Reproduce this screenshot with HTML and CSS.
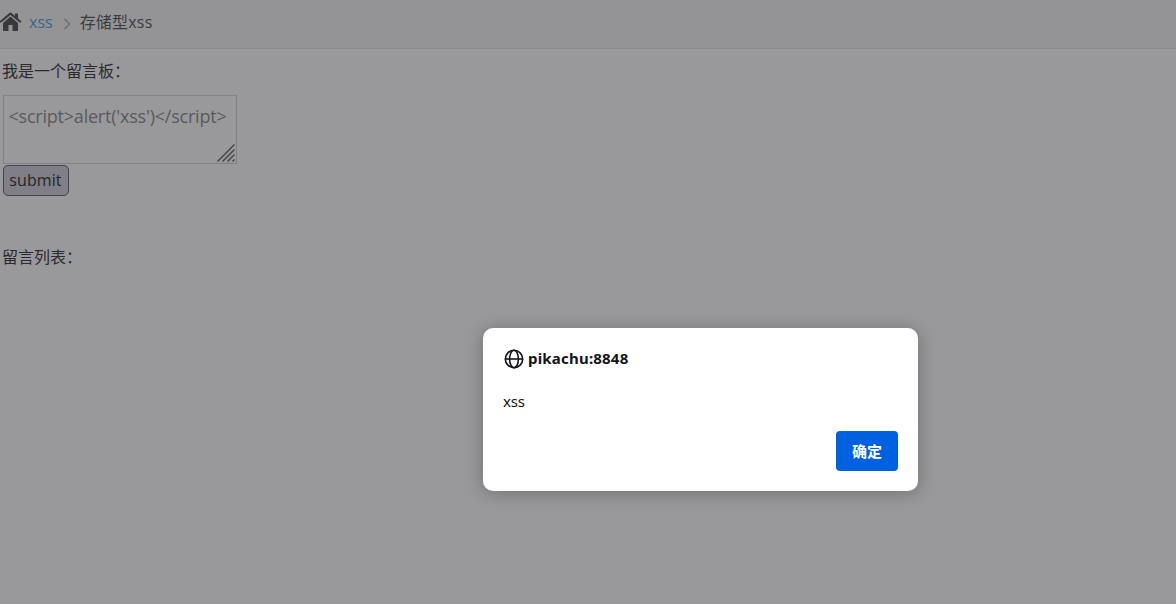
FILE: index.html
```html
<!DOCTYPE html>
<html lang="zh-CN">
<head>
<meta charset="utf-8">
<title>存储型xss</title>
<link rel="stylesheet" href="styles.css">
</head>
<body>
<nav class="breadcrumbs">
  <svg class="home" viewBox="0 0 22 20" width="22" height="20"><path d="M10.500 4.600 3 11v7.200q0 .8.8.8H8.500v-6h4v6h4.700q.8 0 .8-.8V11z"/><path d="M10.500.6q.6 0 1.200.5L15 3.900V1.400h3v5l3.500 3-.9 1.200q-.4.3-.8 0L10.500 3 1.200 10.600q-.4.3-.8 0l-.9-1.200L9.300 1.100q.6-.5 1.200-.5z"/></svg>
  <a class="crumb-link" href="#">xss</a>
  <svg class="chevron" viewBox="0 0 8 12" width="8" height="12"><path d="M1.500 1 6.500 6l-5 5"/></svg>
  <span class="crumb-current">存储型xss</span>
</nav>
<main class="board">
  <p class="label">我是一个留言板：</p>
  <div class="message-box">
    <span class="message-text">&lt;script&gt;alert('xss')&lt;/script&gt;</span>
    <svg class="grip" viewBox="0 0 18 18" width="18" height="18"><path d="M.5 17.500l17-17M5.500 17.500l12-12M10.500 17.500l7-7M15.500 17.500l2-2"/></svg>
  </div>
  <button class="submit">submit</button>
  <p class="label list-label">留言列表：</p>
</main>
<section class="dialog" role="dialog">
  <header class="dialog-title">
    <svg class="globe" viewBox="0 0 20 20" width="20" height="20"><circle cx="10" cy="10" r="8.700"/><ellipse cx="10" cy="10" rx="4.400" ry="8.700"/><path d="M1.300 10h17.400"/></svg>
    <span>pikachu:8848</span>
  </header>
  <p class="dialog-message">xss</p>
  <button class="confirm">确定</button>
</section>
</body>
</html>
```
FILE: styles.css
```css
* { box-sizing: border-box; }
body {
  margin: 0;
  height: 604px;
  overflow: hidden;
  background: #99999b;
  color: #2b2b2f;
  font: 16px/24px "Open Sans", "Noto Sans CJK SC", sans-serif;
}
p { margin: 0; }
.breadcrumbs {
  display: flex;
  align-items: center;
  height: 49px;
  padding-bottom: 4px;
  background: #949496;
  border-bottom: 1px solid #8a8a8c;
}
.home { fill: #38383d; }
.crumb-link {
  margin-left: 7px;
  color: #38658a;
  text-decoration: none;
}
.chevron {
  margin: 3px 9px 0 10px;
  fill: none;
  stroke: #707074;
  stroke-width: 1.7;
}
.crumb-current {
  color: #3b3b3e;
  letter-spacing: .2px;
}
.board {
  display: flex;
  flex-direction: column;
  align-items: flex-start;
  padding: 10px 3px 0;
}
.label { margin-left: -1px; }
.message-box {
  position: relative;
  width: 234px;
  height: 69px;
  margin-top: 12px;
  padding: 7px 4.5px;
  border: 1px solid #828284;
  color: #59595b;
  font-size: 18px;
  line-height: 27px;
  letter-spacing: -.22px;
  white-space: nowrap;
}
.message-text { display: block; }
.grip {
  position: absolute;
  right: 1px;
  bottom: 1px;
  fill: none;
  stroke: #48484c;
  stroke-width: 1.5;
}
.submit {
  width: 66px;
  height: 31px;
  margin-top: 1px;
  padding: 0 1px 2px 0;
  border: 1px solid #44434e;
  border-radius: 5px;
  background: #807f87;
  color: #242428;
  font: inherit;
  letter-spacing: .1px;
}
.list-label { margin-top: 49px; }
.dialog {
  position: absolute;
  left: 483px;
  top: 328px;
  display: flex;
  flex-direction: column;
  width: 435px;
  height: 163px;
  padding: 18px 20px 20px;
  border-radius: 10px;
  background: #fff;
  color: #15141a;
  font-family: "Noto Sans", "Noto Sans CJK SC", sans-serif;
  font-size: 15px;
  box-shadow: 0 2px 18px rgba(12, 12, 13, .28);
}
.dialog-title {
  display: flex;
  align-items: center;
  gap: 4px;
  height: 24px;
  padding-left: 1px;
  font-weight: 700;
  letter-spacing: .2px;
}
.globe {
  margin-top: 1px;
  fill: none;
  stroke: #15141a;
  stroke-width: 1.6;
}
.dialog-message {
  margin-top: 19px;
  letter-spacing: -.2px;
}
.confirm {
  align-self: flex-end;
  width: 62px;
  height: 40px;
  margin-top: auto;
  padding: 0;
  border: 0;
  border-radius: 4px;
  background: #0061e0;
  color: #fff;
  font: 700 15px/24px "Noto Sans CJK SC", sans-serif;
}
```
